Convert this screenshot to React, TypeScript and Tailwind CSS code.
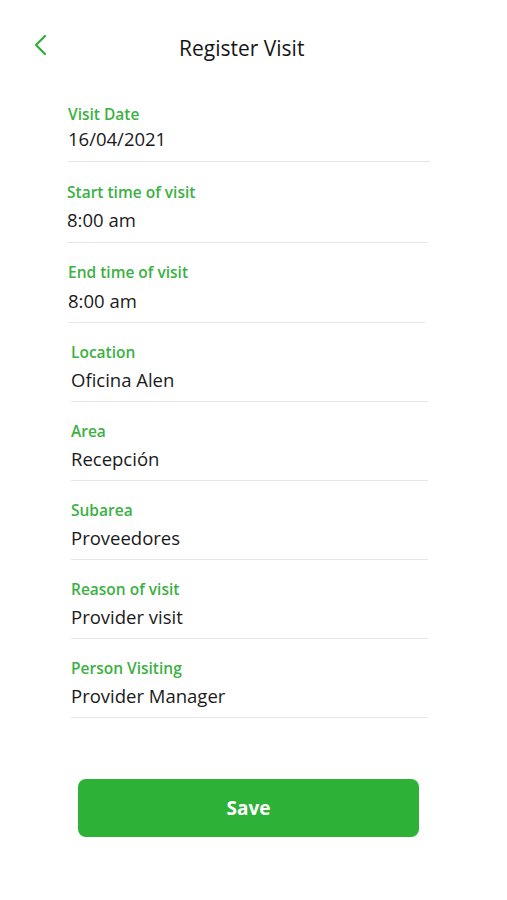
import React from "react";

const fields = [
  { label: "Visit Date", value: "16/04/2021", box: "ml-[68px] w-[362px] mt-[24px]", vm: "mt-[2px]", lm: "mt-[9px]" },
  { label: "Start time of visit", value: "8:00 am", box: "ml-[67px] w-[361px] mt-[20px]", vm: "mt-[5px]", lm: "mt-[9px]" },
  { label: "End time of visit", value: "8:00 am", box: "ml-[68px] w-[357px] mt-[19px]", vm: "mt-[6px]", lm: "mt-[8px]" },
  { label: "Location", value: "Oficina Alen", box: "ml-[71px] w-[357px] mt-[19px]", vm: "mt-[5px]", lm: "mt-[8px]" },
  { label: "Area", value: "Recepción", box: "ml-[71px] w-[357px] mt-[19px]", vm: "mt-[5px]", lm: "mt-[8px]" },
  { label: "Subarea", value: "Proveedores", box: "ml-[71px] w-[357px] mt-[19px]", vm: "mt-[5px]", lm: "mt-[8px]" },
  { label: "Reason of visit", value: "Provider visit", box: "ml-[71px] w-[357px] mt-[19px]", vm: "mt-[5px]", lm: "mt-[8px]" },
  { label: "Person Visiting", value: "Provider Manager", box: "ml-[71px] w-[357px] mt-[19px]", vm: "mt-[5px]", lm: "mt-[8px]" },
];

export default function App() {
  return (
    <div className="w-[507px] h-[900px] bg-white font-['Open_Sans',sans-serif] flex flex-col">
      <div className="relative h-[80px] flex items-start pt-[34px]">
        <svg
          className="absolute left-[33px] top-[34px]"
          width="16"
          height="22"
          viewBox="0 0 16 22"
          fill="none"
        >
          <polyline points="12,2 3,11 12,20" stroke="#2fae3a" strokeWidth="2.2" strokeLinecap="round" strokeLinejoin="round" />
        </svg>
        <div className="ml-[179px] text-[21px] leading-[28px] font-medium text-[#161616]">Register Visit</div>
      </div>
      <div className="flex flex-col">
        {fields.map((f) => (
          <div key={f.label} className={`${f.box} flex flex-col`}>
            <div className="text-[15.5px] leading-[20px] font-semibold text-[#3bb143]">{f.label}</div>
            <div className={`${f.vm} text-[18.5px] leading-[26px] text-[#1a1a1a]`}>{f.value}</div>
            <div className={`${f.lm} h-[1px] bg-[#e6e6e6]`} />
          </div>
        ))}
      </div>
      <div className="mt-[61px] ml-[78px] w-[341px] h-[58px] rounded-[8px] bg-[#2db137] flex items-center justify-center">
        <span className="text-white font-bold text-[19px]">Save</span>
      </div>
    </div>
  );
}
